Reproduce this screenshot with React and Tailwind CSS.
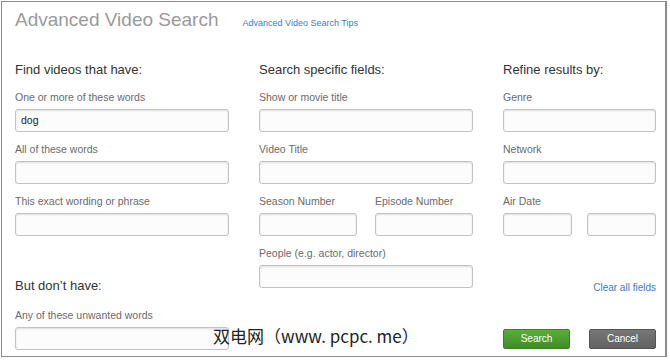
import React from 'react';

// Advanced Video Search form

const Heading = ({ children, className = '' }) => (
  <h2 className={`text-[13px] leading-[16px] text-[#333] ${className}`}>{children}</h2>
);

const Box = ({ value, className = '' }) => (
  <div
    className={`h-[23px] rounded-[3px] border border-[#c2c2c2] bg-[#fcfcfc] shadow-[inset_0_1px_2px_rgba(0,0,0,0.12)] pl-[5px] text-[10.5px] leading-[21px] text-[#222] ${className}`}
  >
    {value}
  </div>
);

const Field = ({ label, value, className = '' }) => (
  <div className={className}>
    <div className="text-[10.5px] leading-[12px] text-[#6a6a6a] mb-[6px] whitespace-nowrap">{label}</div>
    <Box value={value} />
  </div>
);

export default function App() {
  return (
    <div className="relative w-[670px] h-[360px] bg-white font-['Liberation_Sans',Arial,sans-serif]">
      <div className="ml-px mt-px w-[666px] h-[356px] border border-r-2 border-[#8c8c8c] pl-[13px] pt-[8px]">
        {/* Title row */}
        <div className="flex items-baseline">
          <h1 className="text-[19px] leading-[19px] text-[#9a9a9a]">Advanced Video Search</h1>
          <a className="ml-[24px] text-[9px] text-[#3b7cc2]">Advanced Video Search Tips</a>
        </div>

        {/* Three columns */}
        <div className="mt-[31px] grid grid-cols-[214px_214px_153px] gap-x-[30px]">
          <div className="flex flex-col">
            <Heading className="mb-[13px]">Find videos that have:</Heading>
            <Field label="One or more of these words" value="dog" />
            <Field className="mt-[11px]" label="All of these words" />
            <Field className="mt-[11px]" label="This exact wording or phrase" />
            <Heading className="mt-[42px] mb-[15px]">But don’t have:</Heading>
            <Field label="Any of these unwanted words" />
          </div>

          <div className="flex flex-col">
            <Heading className="mb-[13px]">Search specific fields:</Heading>
            <Field label="Show or movie title" />
            <Field className="mt-[11px]" label="Video Title" />
            <div className="mt-[11px] flex justify-between">
              <Field className="w-[98px]" label="Season Number" />
              <Field className="w-[98px]" label="Episode Number" />
            </div>
            <Field className="mt-[11px]" label="People (e.g. actor, director)" />
          </div>

          <div className="flex flex-col">
            <Heading className="mb-[13px]">Refine results by:</Heading>
            <Field label="Genre" />
            <Field className="mt-[11px]" label="Network" />
            <div className="mt-[11px]">
              <div className="text-[10.5px] leading-[12px] text-[#6a6a6a] mb-[6px]">Air Date</div>
              <div className="flex justify-between">
                <Box className="w-[69px]" />
                <Box className="w-[69px]" />
              </div>
            </div>
            <a className="mt-[46px] self-end text-[10px] leading-[12px] text-[#3b7cc2]">Clear all fields</a>
            <div className="mt-[35px] flex justify-between">
              <button className="w-[67px] h-[20px] rounded-[2px] border border-[#3d7f22] bg-gradient-to-b from-[#5aae3a] to-[#3f8d25] text-[10px] leading-[18px] text-white">
                Search
              </button>
              <button className="w-[67px] h-[20px] rounded-[2px] border border-[#555] bg-gradient-to-b from-[#777] to-[#626262] text-[10px] leading-[18px] text-white">
                Cancel
              </button>
            </div>
          </div>
        </div>
      </div>

      {/* watermark */}
      <div className="absolute left-[213px] top-[324px] text-[17px] leading-[22px] text-[#222] whitespace-nowrap font-['Noto_Sans_CJK_SC',sans-serif]">
        双电网（www. pcpc. me）
      </div>
    </div>
  );
}
